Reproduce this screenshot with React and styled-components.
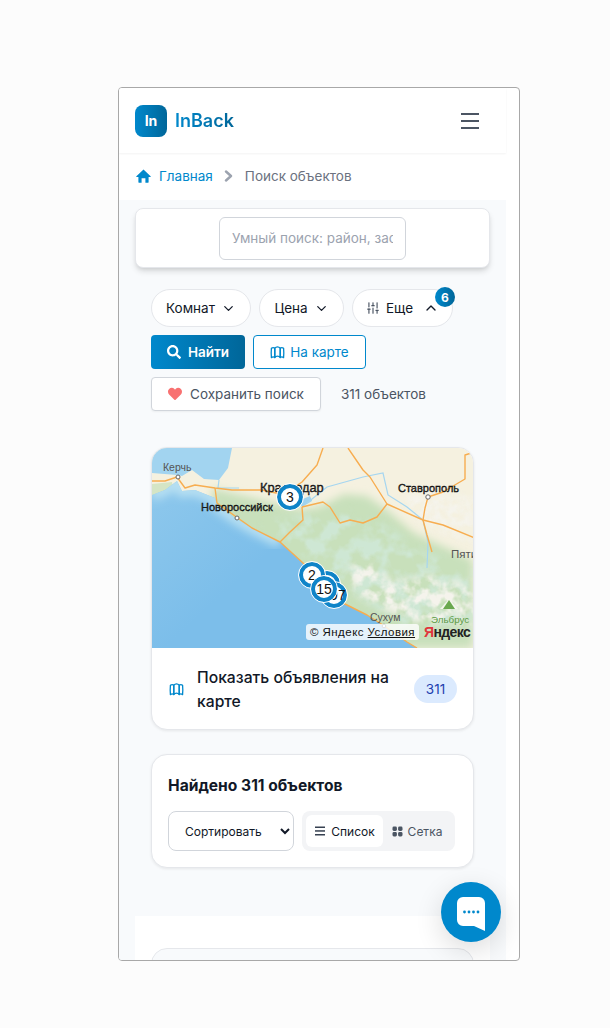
import React from 'react'
import styled, { createGlobalStyle } from 'styled-components'
import { ChevronDown, ChevronUp, SlidersVertical } from 'lucide-react'
import { FaHeart, FaSearch } from 'react-icons/fa'

const BLUE = '#0088cc'
const GRADIENT = 'linear-gradient(90deg, #0088cc, #006699)'

const GlobalStyle = createGlobalStyle`
  * { box-sizing: border-box; }
  html, body { margin: 0; padding: 0; background: #fcfcfc; }
  body { font-family: Inter, "Open Sans", sans-serif; }
`

function HomeIcon() {
  return (
    <svg width="15" height="14" viewBox="0 0 15 14" fill={BLUE}>
      <path d="M7.5 0.6L14.6 7.2c.3.3.1.8-.3.8H12.6v5.2c0 .3-.2.5-.5.5H9.4V9.2H5.6v4.5H2.9c-.3 0-.5-.2-.5-.5V8H.7c-.4 0-.6-.5-.3-.8z" />
    </svg>
  )
}

function CrumbArrow() {
  return (
    <svg width="9" height="12" viewBox="0 0 9 12" fill="none" stroke="#9ca3af" strokeWidth="2.4" strokeLinecap="round" strokeLinejoin="round">
      <path d="M2 1.5L7 6L2 10.5" />
    </svg>
  )
}

function MapIcon({ size = 15 }) {
  return (
    <svg width={size} height={size} viewBox="0 0 16 16" fill="none" stroke={BLUE} strokeWidth="1.4" strokeLinejoin="round">
      <path d="M1.5 3.5c1.2-1 2.4-1 3.6-.2v10c-1.2-.8-2.4-.8-3.6.2-.3-3.4-.3-6.6 0-10z" />
      <path d="M5.1 3.3c.9-1 2-1.4 2.9-1.4s2 .4 2.9 1.4v10c-.9-1-2-1.4-2.9-1.4s-2 .4-2.9 1.4z" />
      <path d="M10.9 3.3c1.2-.8 2.4-.8 3.6.2.3 3.4.3 6.6 0 10-1.2-1-2.4-1-3.6-.2z" />
    </svg>
  )
}

function ListIcon() {
  return (
    <svg width="12" height="12" viewBox="0 0 12 12" fill="#374151">
      <rect x="1" y="1.5" width="10" height="1.5" />
      <rect x="1" y="5.2" width="10" height="1.5" />
      <rect x="1" y="9" width="10" height="1.5" />
    </svg>
  )
}

function GridIcon() {
  return (
    <svg width="11" height="11" viewBox="0 0 11 11" fill="#4b5563">
      <rect x="0.5" y="0.5" width="4.4" height="4.4" rx="1.4" />
      <rect x="6.1" y="0.5" width="4.4" height="4.4" rx="1.4" />
      <rect x="0.5" y="6.1" width="4.4" height="4.4" rx="1.4" />
      <rect x="6.1" y="6.1" width="4.4" height="4.4" rx="1.4" />
    </svg>
  )
}

function ChatIcon() {
  return (
    <svg width="28" height="34" viewBox="0 0 28 34" fill="none">
      <path d="M6 0h16a6 6 0 0 1 6 6v28l-11-5H6a6 6 0 0 1-6-6V6a6 6 0 0 1 6-6z" fill="#fff" />
      <circle cx="7.5" cy="15" r="1.4" fill={BLUE} />
      <circle cx="12" cy="15" r="1.4" fill={BLUE} />
      <circle cx="16.5" cy="15" r="1.4" fill={BLUE} />
      <circle cx="21" cy="15" r="1.4" fill={BLUE} />
    </svg>
  )
}

const COAST = 'M0 47L13 42L25 33L30 43L43 42L63 50L65 57L83 70L100 80L128 94L151 115L171 137L191 155L215 167L231 177L255 194L265 200'
const COAST_WEST = 'M0 47L13 42L25 33L30 43L43 42L63 50L65 57L83 70L100 80L128 94'
const SEA = COAST + 'H0z'
const GREEN = 'M60 40L110 52L150 62L170 58L192 46L215 48L235 62L262 85L321 112V200H250L60 90z'

const ROADS = [
  'M0 33L13 33L25 29L33 40L43 37L63 40L80 42L110 42L138 48',
  'M63 40L65 55L83 68L100 80L128 94L151 115L171 137L191 155L215 167L231 177L255 194L265 200',
  'M150 59L151 72L138 84L128 94',
  'M150 59L171 54L178 59L188 75L198 72L211 75L225 69L235 56',
  'M196 0L211 22L218 29L235 56L271 72L291 77L323 90',
  'M171 0L165 17L150 34L141 40',
  'M271 72L273 60L276 49L291 44L313 31L313 7L323 4',
  'M271 72L275 87L280 104',
]

const RIVERS = [
  'M155 55L175 39L211 29L231 25L236 47L255 59L271 72L276 94L275 120',
  'M67 32L66 40L87 40',
]

function MapDrawing() {
  return (
    <MapSvg viewBox="0 0 321 200" width="321" height="200">
      <defs>
        <linearGradient id="sea" x1="0" y1="0" x2="1" y2="0.7">
          <stop offset="0" stopColor="#8ec8ec" />
          <stop offset="0.5" stopColor="#7cbeea" />
          <stop offset="1" stopColor="#7cbeea" />
        </linearGradient>
        <filter id="soft"><feGaussianBlur stdDeviation="4" /></filter>
        <filter id="greenNoise" x="0" y="0" width="1" height="1">
          <feTurbulence type="fractalNoise" baseFrequency="0.055" numOctaves="3" seed="7" />
          <feColorMatrix values="0 0 0 0 .62  0 0 0 0 .8  0 0 0 0 .66  4 0 0 0 -1.6" />
        </filter>
        <filter id="lightNoise" x="0" y="0" width="1" height="1">
          <feTurbulence type="fractalNoise" baseFrequency="0.09" numOctaves="3" seed="12" />
          <feColorMatrix values="0 0 0 0 .91  0 0 0 0 .9  0 0 0 0 .84  3 0 0 0 -1.05" />
        </filter>
        <mask id="greenMask">
          <path d="M110 75L190 62L235 78L262 100L321 125V180H250L190 135z" fill="#fff" filter="url(#soft)" />
        </mask>
        <mask id="snowMask">
          <path d="M195 122L215 112L240 135L275 128L321 138V175H270L240 165L205 145z" fill="#fff" filter="url(#soft)" />
        </mask>
        <mask id="reliefMask">
          <path d="M250 50L275 42L321 50V95L285 82L262 68z" fill="#fff" filter="url(#soft)" />
        </mask>
        <clipPath id="seaClip"><path d={SEA} /></clipPath>
      </defs>
      <rect width="321" height="200" fill="#f5f1e0" />
      <path d="M0 36L20 34L22 50L0 52z" fill="#d5e5c5" />
      <path d={GREEN} fill="#c8e0bb" filter="url(#soft)" />
      <rect width="321" height="200" filter="url(#greenNoise)" mask="url(#greenMask)" />
      <rect width="321" height="200" filter="url(#lightNoise)" mask="url(#snowMask)" />
      <rect width="321" height="200" filter="url(#lightNoise)" mask="url(#reliefMask)" />
      <path d={SEA} fill="url(#sea)" />
      <g clipPath="url(#seaClip)">
        <path d={COAST_WEST} fill="none" stroke="#b8e0f2" strokeWidth="12" filter="url(#soft)" />
      </g>
      <path d="M0 0H80L76 20L70 28L67 32L52 31L40 22L30 28L25 27L0 25z" fill="#a2d4f0" />
      <path d="M146 53L158 48L160 53L150 59z" fill="#9fd3ef" />
      {RIVERS.map(d => <path key={d} d={d} fill="none" stroke="#a6d6f0" strokeWidth="1.2" />)}
      {ROADS.map(d => <path key={d} d={d} fill="none" stroke="#f7ad50" strokeWidth="1.4" strokeLinejoin="round" />)}
      <path d="M288 161l9-10 9 10z" fill="#f4f6ee" />
      <path d="M291 161l6-9 6 9z" fill="#6aa84f" />
      <CityDot cx="26" cy="29" r="2" />
      <CityDot cx="85" cy="70" r="2" />
      <CityDot cx="276" cy="49" r="2.2" />
      <CityDot cx="232" cy="178" r="1.8" />
      <MapLabel x="11" y="23" $size={10.5} fill="#555">Керчь</MapLabel>
      <MapLabel x="108" y="44" $size={12.8} $heavy fill="#333">Краснодар</MapLabel>
      <MapLabel x="49" y="63" $size={11} $heavy fill="#333">Новороссийск</MapLabel>
      <MapLabel x="246" y="44" $size={11} $heavy fill="#333">Ставрополь</MapLabel>
      <MapLabel x="299" y="110" $size={11.5} fill="#555">Пяти</MapLabel>
      <MapLabel x="218" y="173" $size={10.5} fill="#555">Сухум</MapLabel>
      <MapLabel x="279" y="175" $size={9.8} fill="#5c9a44">Эльбрус</MapLabel>
    </MapSvg>
  )
}

export default function App() {
  return (
    <>
      <GlobalStyle />
      <Frame>
        <Screen>
          <Header>
            <Brand>
              <LogoBox>In</LogoBox>
              <BrandName>InBack</BrandName>
            </Brand>
            <Burger aria-label="Меню"><span /><span /><span /></Burger>
          </Header>
          <Breadcrumbs>
            <HomeIcon />
            <CrumbLink>Главная</CrumbLink>
            <CrumbArrow />
            <CrumbCurrent>Поиск объектов</CrumbCurrent>
          </Breadcrumbs>
          <Section>
            <SearchCard>
              <SearchInput placeholder="Умный поиск: район, застройщик" />
            </SearchCard>
            <Filters>
              <Row>
                <Pill $width={100}>Комнат <ChevronDown size={15} /></Pill>
                <Pill $width={85}>Цена <ChevronDown size={15} /></Pill>
                <Pill $width={101}>
                  <SlidersVertical size={14} color="#4b5563" /> Еще <ChevronUpGap><ChevronUp size={16} /></ChevronUpGap>
                  <Badge>6</Badge>
                </Pill>
              </Row>
              <Row>
                <PrimaryButton><FaSearch size={14} /> Найти</PrimaryButton>
                <OutlineButton><MapIcon /> На карте</OutlineButton>
              </Row>
              <Row $gap={20}>
                <SaveButton><FaHeart size={14} color="#f87171" /> Сохранить поиск</SaveButton>
                <Count>311 объектов</Count>
              </Row>
            </Filters>
            <Cards>
              <Card>
                <MapBox>
                  <MapDrawing />
                  <Pin $x={138} $y={49}>3</Pin>
                  <Pin $x={175} $y={136} />
                  <Pin $x={160} $y={127}>2</Pin>
                  <Pin $x={182} $y={147}>297</Pin>
                  <Pin $x={172} $y={141}>15</Pin>
                  <Copyright>© Яндекс <u>Условия</u></Copyright>
                  <YandexLogo><b>Я</b>ндекс</YandexLogo>
                </MapBox>
                <MapFooter>
                  <MapIcon />
                  <MapFooterText>Показать объявления на карте</MapFooterText>
                  <CountBadge>311</CountBadge>
                </MapFooter>
              </Card>
              <ResultsCard>
                <ResultsTitle>Найдено 311 объектов</ResultsTitle>
                <ResultsControls>
                  <SortSelect defaultValue="">
                    <option value="">Сортировать</option>
                  </SortSelect>
                  <ViewSwitch>
                    <ViewButton $active><ListIcon /> Список</ViewButton>
                    <ViewButton><GridIcon /> Сетка</ViewButton>
                  </ViewSwitch>
                </ResultsControls>
              </ResultsCard>
            </Cards>
            <Listing>
              <ListingCard />
            </Listing>
          </Section>
        </Screen>
        <ChatButton aria-label="Чат"><ChatIcon /></ChatButton>
      </Frame>
    </>
  )
}

const Frame = styled.div`
  position: relative;
  width: 402px;
  height: 874px;
  margin: 87px 0 0 118px;
  border: 1px solid #a8a8a8;
  border-radius: 4px;
  background: #fff;
  overflow: hidden;
`
const Screen = styled.div`
  width: 387px;
`
const Header = styled.header`
  height: 65px;
  padding: 0 16px;
  display: flex;
  align-items: center;
  justify-content: space-between;
  background: #fff;
  box-shadow: 0 1px 2px rgba(0, 0, 0, .05);
  position: relative;
`
const Brand = styled.div`
  display: flex;
  align-items: center;
  gap: 8px;
`
const LogoBox = styled.div`
  width: 32px;
  height: 32px;
  border-radius: 8px;
  background: ${GRADIENT};
  color: #fff;
  font-size: 14px;
  font-weight: 700;
  display: flex;
  align-items: center;
  justify-content: center;
`
const BrandName = styled.span`
  font-size: 18px;
  font-weight: 600;
  background: ${GRADIENT};
  -webkit-background-clip: text;
  background-clip: text;
  color: transparent;
`
const Burger = styled.button`
  width: 40px;
  height: 40px;
  padding: 0;
  border: 0;
  background: none;
  display: flex;
  flex-direction: column;
  align-items: center;
  justify-content: center;
  gap: 5px;

  span {
    width: 18px;
    height: 2px;
    background: #4b5563;
  }
`
const Breadcrumbs = styled.nav`
  height: 47px;
  padding: 0 17px 2px;
  display: flex;
  align-items: center;
  font-size: 13.5px;
`
const CrumbLink = styled.a`
  color: ${BLUE};
  margin: 0 11px 0 8px;
`
const CrumbCurrent = styled.span`
  color: #6b7280;
  margin-left: 12px;
`
const Section = styled.section`
  background: #f8fafc;
  padding: 8px 16px 0;
`
const SearchCard = styled.div`
  height: 60px;
  background: #fff;
  border: 1px solid #e5e7eb;
  border-radius: 8px;
  box-shadow: 0 4px 6px -1px rgba(0, 0, 0, .14), 0 2px 4px -2px rgba(0, 0, 0, .1);
  display: flex;
  align-items: center;
  justify-content: center;
`
const SearchInput = styled.input`
  width: 187px;
  height: 43px;
  padding: 0 12px;
  border: 1px solid #d1d5db;
  border-radius: 6px;
  font: 13.5px Inter, sans-serif;
  color: #111827;
  outline: none;

  &::placeholder {
    color: #9ca3af;
  }
`
const Filters = styled.div`
  padding: 21px 16px 0;
  display: flex;
  flex-direction: column;
  gap: 8px;
`
const Row = styled.div`
  display: flex;
  align-items: center;
  gap: ${props => props.$gap || 8}px;
`
const Pill = styled.button`
  position: relative;
  width: ${props => props.$width}px;
  height: 38px;
  padding: 0;
  display: flex;
  align-items: center;
  justify-content: center;
  gap: 6px;
  background: #fff;
  border: 1px solid #e5e7eb;
  border-radius: 19px;
  font: 400 13.5px Inter, sans-serif;
  color: #111827;
  white-space: nowrap;
`
const ChevronUpGap = styled.span`
  display: flex;
  margin-left: 4px;
`
const Badge = styled.span`
  position: absolute;
  top: -3px;
  right: -3px;
  width: 20px;
  height: 20px;
  border-radius: 50%;
  background: ${GRADIENT};
  color: #fff;
  font-size: 12px;
  font-weight: 700;
  display: flex;
  align-items: center;
  justify-content: center;
`
const PrimaryButton = styled.button`
  width: 94px;
  height: 34px;
  display: flex;
  align-items: center;
  justify-content: center;
  gap: 7px;
  border: 0;
  border-radius: 4px;
  background: ${GRADIENT};
  color: #fff;
  font: 600 13.5px Inter, sans-serif;
`
const OutlineButton = styled.button`
  width: 113px;
  height: 34px;
  display: flex;
  align-items: center;
  justify-content: center;
  gap: 5px;
  background: #fff;
  border: 1px solid ${BLUE};
  border-radius: 4px;
  color: ${BLUE};
  font: 400 13.5px Inter, sans-serif;
`
const SaveButton = styled.button`
  width: 170px;
  height: 34px;
  display: flex;
  align-items: center;
  justify-content: center;
  gap: 8px;
  background: #fff;
  border: 1px solid #d1d5db;
  border-radius: 4px;
  box-shadow: 0 1px 2px rgba(0, 0, 0, .05);
  color: #4b5563;
  font: 400 13.5px Inter, sans-serif;
`
const Count = styled.span`
  color: #4b5563;
  font-size: 13.5px;
  font-weight: 400;
`
const Cards = styled.div`
  margin: 36px 16px 0;
  display: flex;
  flex-direction: column;
  gap: 24px;
`
const Card = styled.div`
  background: #fff;
  border: 1px solid #e5e7eb;
  border-radius: 16px;
  box-shadow: 0 1px 3px rgba(0, 0, 0, .08);
  overflow: hidden;
`
const MapBox = styled.div`
  position: relative;
  height: 200px;
  overflow: hidden;
`
const MapSvg = styled.svg`
  display: block;
`
const CityDot = styled.circle`
  fill: #fff;
  stroke: #666;
  stroke-width: 1;
`
const MapLabel = styled.text`
  font-family: "Liberation Sans", Arial, sans-serif;
  font-size: ${props => props.$size}px;
  stroke: currentColor;
  stroke-width: ${props => props.$heavy ? .35 : 0}px;
`
const Pin = styled.div`
  position: absolute;
  left: ${props => props.$x}px;
  top: ${props => props.$y}px;
  width: 26px;
  height: 26px;
  margin: -13px 0 0 -13px;
  border-radius: 50%;
  background: #fff;
  border: 4.5px solid #0f84c8;
  outline: 1.5px solid #fff;
  font: 14px "Liberation Sans", Arial, sans-serif;
  color: #111;
  display: flex;
  align-items: center;
  justify-content: center;
`
const Copyright = styled.div`
  position: absolute;
  left: 154px;
  bottom: 8px;
  height: 16px;
  padding: 0 4px;
  background: rgba(255, 255, 255, .8);
  border-radius: 3px;
  font: 11.5px/16px "Liberation Sans", Arial, sans-serif;
  letter-spacing: .45px;
  color: #111;
  white-space: nowrap;
`
const YandexLogo = styled.div`
  position: absolute;
  left: 272px;
  bottom: 8px;
  font: 700 14px/16px "Liberation Sans", Arial, sans-serif;
  letter-spacing: -.6px;
  color: #222;

  b {
    color: #e0353b;
  }
`
const MapFooter = styled.div`
  height: 81px;
  padding: 2px 16px 0 17px;
  display: flex;
  align-items: center;
`
const MapFooterText = styled.div`
  flex: 1;
  margin: 0 20px 0 13px;
  font-size: 15.7px;
  line-height: 24px;
  font-weight: 500;
  color: #111827;
`
const CountBadge = styled.span`
  width: 43px;
  height: 28px;
  margin-top: -2px;
  border-radius: 14px;
  background: #dbeafe;
  color: #1e40af;
  font-size: 13.5px;
  font-weight: 400;
  display: flex;
  align-items: center;
  justify-content: center;
`
const ResultsCard = styled(Card)`
  height: 114px;
  padding: 16px;
`
const ResultsTitle = styled.h2`
  margin: 5px 0 15px;
  font-size: 15.6px;
  line-height: 20px;
  font-weight: 700;
  color: #111827;
`
const ResultsControls = styled.div`
  display: flex;
  gap: 8px;
`
const SortSelect = styled.select`
  width: 126px;
  height: 40px;
  padding: 0 12px;
  background: #fff;
  border: 1px solid #d1d5db;
  border-radius: 8px;
  font: 400 12px Inter, sans-serif;
  color: #111827;
`
const ViewSwitch = styled.div`
  width: 153px;
  height: 40px;
  padding: 4px;
  display: flex;
  background: #f3f4f6;
  border-radius: 8px;
`
const ViewButton = styled.button`
  width: ${props => props.$active ? 77 : 68}px;
  display: flex;
  align-items: center;
  justify-content: center;
  gap: 5px;
  border: 0;
  border-radius: 6px;
  background: ${props => props.$active ? '#fff' : 'transparent'};
  color: ${props => props.$active ? '#111827' : '#4b5563'};
  font: 400 12px Inter, sans-serif;
  white-space: nowrap;
`
const Listing = styled.section`
  margin-top: 48px;
  padding: 32px 16px 0;
  background: #fff;
`
const ListingCard = styled.div`
  height: 200px;
  background: #f8fafc;
  border: 1px solid #e5e7eb;
  border-radius: 16px;
`
const ChatButton = styled.button`
  position: absolute;
  left: 322px;
  top: 794px;
  width: 60px;
  height: 60px;
  padding: 3px 0 0;
  border: 0;
  border-radius: 50%;
  background: ${BLUE};
  box-shadow: 0 8px 28px rgba(0, 0, 0, .14);
  display: flex;
  align-items: center;
  justify-content: center;
`
